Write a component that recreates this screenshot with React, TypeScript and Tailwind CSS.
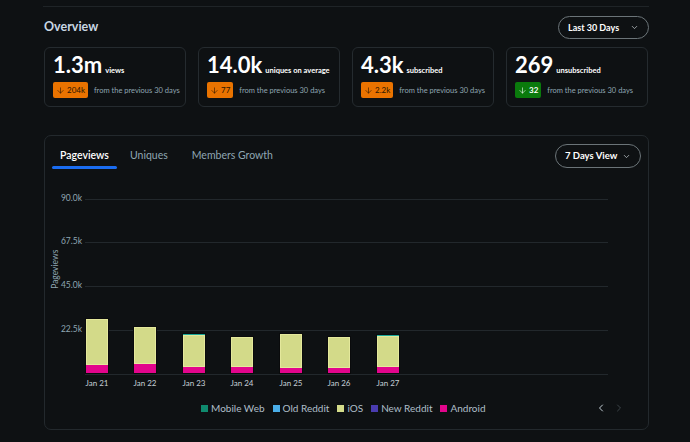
import React from "react";
import { ChevronDown, ChevronLeft, ChevronRight, ArrowDown } from "lucide-react";

const cards = [
  { big: "1.3m", label: "views", delta: "204k", green: false },
  { big: "14.0k", label: "uniques on average", delta: "77", green: false },
  { big: "4.3k", label: "subscribed", delta: "2.2k", green: false },
  { big: "269", label: "unsubscribed", delta: "32", green: true },
];

const bars = [
  { d: "Jan 21", x: 40, top: 139, pink: 186, teal: false },
  { d: "Jan 22", x: 88, top: 147, pink: 185, teal: false },
  { d: "Jan 23", x: 137, top: 154, pink: 188, teal: true },
  { d: "Jan 24", x: 185, top: 157, pink: 188, teal: false },
  { d: "Jan 25", x: 234, top: 154, pink: 189, teal: false },
  { d: "Jan 26", x: 282, top: 157, pink: 189, teal: false },
  { d: "Jan 27", x: 331, top: 155, pink: 188, teal: true },
];

const grid = [
  { l: "90.0k", y: 20 },
  { l: "67.5k", y: 63 },
  { l: "45.0k", y: 107 },
  { l: "22.5k", y: 151 },
];

const legend = [
  { n: "Mobile Web", c: "bg-[#0f8a6e]" },
  { n: "Old Reddit", c: "bg-[#4aaee8]" },
  { n: "iOS", c: "bg-[#d4dc8a]" },
  { n: "New Reddit", c: "bg-[#4a3cb0]" },
  { n: "Android", c: "bg-[#e2058c]" },
];

export default function App() {
  return (
    <div
      className="w-[690px] h-[442px] bg-[#0e1113] overflow-hidden text-[#eef1f3]"
      style={{ fontFamily: 'Lato, "Noto Sans", sans-serif' }}
    >
      <div className="ml-[43px] w-[606px] pt-[6px]">
        <div className="h-px bg-[#1f2427]" />
        <div className="flex items-center justify-between mt-[9px] h-[23px] pl-px">
          <div className="text-[12.5px] font-bold text-[#c8d7e3] leading-none">Overview</div>
          <div className="w-[91px] h-[23px] rounded-full border border-[#6b7478] flex items-center justify-between pl-[9px] pr-[9px]">
            <span className="text-[9px] font-bold text-white">Last 30 Days</span>
            <ChevronDown size={9} strokeWidth={2} className="text-[#c0c8cc]" />
          </div>
        </div>
        <div className="grid grid-cols-4 gap-[12px] mt-[8px] pl-px pr-px">
          {cards.map((c) => (
            <div key={c.big} className="h-[60px] rounded-[6px] border border-[#252b2f] px-[8px] pt-[6px] whitespace-nowrap">
              <div className="flex items-baseline gap-[3px]">
                <span className="text-[22px] font-bold leading-[22px] text-white">{c.big}</span>
                <span className="text-[7.5px] font-bold text-white">{c.label}</span>
              </div>
              <div className="flex items-center gap-[6px] mt-[6px]">
                <div
                  className={
                    "h-[16px] rounded-[2px] flex items-center gap-[2px] px-[3px] text-[8px] " +
                    (c.green ? "bg-[#0a7a0c] text-white font-bold" : "bg-[#ea7300] text-[#2a1600]")
                  }
                >
                  <ArrowDown size={9} strokeWidth={1.6} />
                  <span>{c.delta}</span>
                </div>
                <span className="text-[7.5px] text-[#8fa6b2]">from the previous 30 days</span>
              </div>
            </div>
          ))}
        </div>
        <div className="mt-[28px] ml-px w-[605px] h-[295px] rounded-[7px] border border-[#23292d] relative">
          <div className="flex items-start justify-between pt-[8px] pl-[7px] pr-[7px]">
            <div className="flex items-start text-[10.5px] leading-none">
              <div className="w-[65px] flex flex-col items-center pt-[6px]">
                <span className="text-white font-semibold">Pageviews</span>
                <div className="w-[65px] h-[3px] rounded-full bg-[#1a6cf0] mt-[5px]" />
              </div>
              <span className="ml-[13px] pt-[6px] text-[#8fa6b2]">Uniques</span>
              <span className="ml-[24px] pt-[6px] text-[#8fa6b2]">Members Growth</span>
            </div>
            <div className="w-[86px] h-[24px] rounded-full border border-[#6b7478] flex items-center justify-between pl-[9px] pr-[9px]">
              <span className="text-[9.5px] font-bold text-white">7 Days View</span>
              <ChevronDown size={9} strokeWidth={2} className="text-[#c0c8cc]" />
            </div>
          </div>
          <div className="absolute left-0 top-[43px] w-[603px] h-[215px]">
            {grid.map((g) => (
              <React.Fragment key={g.l}>
                <div className="absolute left-[40px] w-[523px] h-px bg-[#22282c]" style={{ top: g.y }} />
                <div
                  className="absolute right-[566px] text-[8.5px] text-[#8fa6b2] leading-none"
                  style={{ top: g.y - 5 }}
                >
                  {g.l}
                </div>
              </React.Fragment>
            ))}
            <div className="absolute left-[40px] w-[523px] h-px bg-[#22282c] top-[195px]" />
            <div
              className="absolute text-[8.5px] text-[#8fa6b2] leading-none origin-center -rotate-90"
              style={{ left: -9, top: 86 }}
            >
              Pageviews
            </div>
            {bars.map((b) => (
              <React.Fragment key={b.d}>
                <div
                  className="absolute w-[24px] flex flex-col border border-[#0a0b0c]"
                  style={{ left: b.x, top: b.top, height: 195 - b.top }}
                >
                  {b.teal && <div className="h-px bg-[#1aa89a]" />}
                  <div className="flex-1 bg-[#d3da89] border border-[#e4e89c]" />
                  <div className="bg-[#e2058c]" style={{ height: 194 - b.pink }} />
                </div>
                <div
                  className="absolute w-[40px] text-center text-[8px] text-[#c4cfd6] leading-none"
                  style={{ left: b.x - 8, top: 200 }}
                >
                  {b.d}
                </div>
              </React.Fragment>
            ))}
          </div>
          <div className="absolute left-0 top-[266px] w-full flex items-center">
            <div className="ml-[156px] flex items-center gap-[8px] text-[10px] text-[#aebfc9] leading-none">
              {legend.map((l) => (
                <div key={l.n} className="flex items-center gap-[3px]">
                  <div className={"w-[7px] h-[7px] " + l.c} />
                  <span>{l.n}</span>
                </div>
              ))}
            </div>
            <div className="ml-auto mr-[23px] flex items-center gap-[6px]">
              <ChevronLeft size={12} strokeWidth={2} className="text-[#c4cfd6]" />
              <ChevronRight size={12} strokeWidth={2} className="text-[#3c4448]" />
            </div>
          </div>
        </div>
      </div>
    </div>
  );
}
